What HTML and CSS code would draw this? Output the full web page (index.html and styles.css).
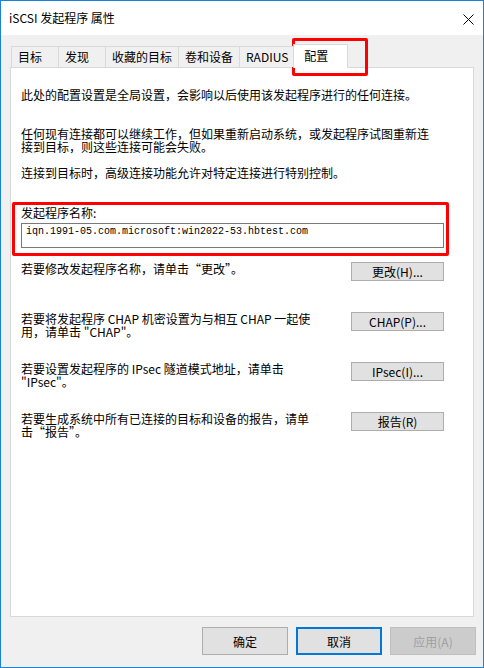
FILE: index.html
```html
<!DOCTYPE html>
<html lang="zh-CN">
<head>
<meta charset="UTF-8">
<title>iSCSI 发起程序 属性</title>
<link rel="stylesheet" href="styles.css">
</head>
<body>

<div class="window">
    <div class="titlebar">
        <span class="title">iSCSI 发起程序 属性</span>
        <svg class="close" width="11" height="11" viewBox="0 0 11 11">
            <path d="M0.5 0.5 L10.5 10.5 M10.5 0.5 L0.5 10.5" stroke="#000" stroke-width="1" fill="none"/>
        </svg>
    </div>

    <!-- Abas -->
    <div class="tabs">
        <div class="tab">目标</div>
        <div class="tab">发现</div>
        <div class="tab">收藏的目标</div>
        <div class="tab">卷和设备</div>
        <div class="tab">RADIUS</div>
        <div class="tab active">配置</div>
    </div>

    <div class="panel">
        <p class="text intro">此处的配置设置是全局设置，会影响以后使用该发起程序进行的任何连接。</p>
        <p class="text warn">任何现有连接都可以继续工作，但如果重新启动系统，或发起程序试图重新连<br>接到目标，则这些连接可能会失败。</p>
        <p class="text adv">连接到目标时，高级连接功能允许对特定连接进行特别控制。</p>

        <div class="name-group">
            <div class="label">发起程序名称:</div>
            <div class="name-box">iqn.1991-05.com.microsoft:win2022-53.hbtest.com</div>
        </div>

        <div class="actions">
            <div class="action">
                <p class="text">若要修改发起程序名称，请单击“更改”。</p>
                <button class="btn-small">更改(H)...</button>
            </div>
            <div class="action">
                <p class="text">若要将发起程序 CHAP 机密设置为与相互 CHAP 一起使<br>用，请单击 "CHAP"。</p>
                <button class="btn-small">CHAP(P)...</button>
            </div>
            <div class="action">
                <p class="text">若要设置发起程序的 IPsec 隧道模式地址，请单击<br>"IPsec"。</p>
                <button class="btn-small">IPsec(I)...</button>
            </div>
            <div class="action">
                <p class="text">若要生成系统中所有已连接的目标和设备的报告，请单<br>击“报告”。</p>
                <button class="btn-small">报告(R)</button>
            </div>
        </div>
    </div>

    <div class="footer">
        <button class="btn">确定</button>
        <button class="btn btn-focus">取消</button>
        <button class="btn" disabled>应用(A)</button>
    </div>

    <!-- marcação vermelha sobre a aba -->
    <div class="mark mark-tab"></div>
</div>

</body>
</html>
```

FILE: styles.css
```css
body {
    margin: 0;
    padding: 0;
    font-family: "Noto Sans CJK SC", "Liberation Sans", sans-serif;
    font-size: 12px;
    color: #000;
}

.window {
    position: relative;
    width: 484px;
    height: 668px;
    box-sizing: border-box;
    border: 1px solid #1883d7;
    background-color: #f0f0f0;
    display: flex;
    flex-direction: column;
}

.titlebar {
    height: 34px;
    background-color: #fff;
    display: flex;
    align-items: center;
    justify-content: space-between;
    padding: 0 9px 0 8px;
}

.title {
    font-size: 12px;
    line-height: 16px;
}

.close {
    display: block;
    margin-top: 2px;
}

.tabs {
    height: 32px;
    display: flex;
    align-items: flex-end;
    padding-left: 10px;
    position: relative;
    z-index: 1;
}

.tab {
    height: 21px;
    box-sizing: border-box;
    min-width: 48px;
    padding: 0 6px;
    border: 1px solid #d9d9d9;
    border-bottom: none;
    margin-left: -1px;
    line-height: 20px;
    background-color: #f0f0f0;
}

.tab:first-child {
    margin-left: 0;
}

.tab.active {
    height: 24px;
    width: 55px;
    margin-left: -2px;
    margin-bottom: -1px;
    padding-left: 10px;
    background-color: #fff;
    line-height: 22px;
}

.panel {
    height: 550px;
    box-sizing: border-box;
    margin: 0 9px;
    border: 1px solid #d9d9d9;
    background-color: #fff;
    padding: 20px 29px 0 10px;
}

.text {
    margin: 0;
    line-height: 13px;
    white-space: nowrap;
}

.warn {
    margin-top: 26px;
}

.adv {
    margin-top: 13px;
}

.name-group {
    position: relative;
    margin-top: 28px;
}

.name-group::before {
    content: "";
    position: absolute;
    top: -5px;
    left: -9px;
    right: -5px;
    bottom: -8px;
    border: 3px solid #f00;
    border-radius: 2px;
}

.label {
    line-height: 12px;
}

.name-box {
    margin-top: 4px;
    height: 25px;
    box-sizing: border-box;
    border: 1px solid #7a7a7a;
    padding: 2px 4px;
    font-family: "Liberation Mono", monospace;
    font-size: 10px;
    line-height: 12px;
}

.actions {
    margin-top: 14px;
}

.action {
    height: 50px;
    display: flex;
    align-items: flex-start;
    justify-content: space-between;
}

.btn-small {
    width: 93px;
    height: 19px;
    box-sizing: border-box;
    border: 1px solid #adadad;
    background-color: #e1e1e1;
    font-family: "Noto Sans CJK SC", sans-serif;
    font-size: 12px;
    line-height: 15px;
    padding: 0;
    color: #000;
}

.footer {
    display: flex;
    justify-content: flex-end;
    gap: 8px;
    padding: 10px 7px 0 0;
}

.btn {
    width: 86px;
    height: 28px;
    box-sizing: border-box;
    border: 1px solid #adadad;
    background-color: #e1e1e1;
    font-family: "Noto Sans CJK SC", sans-serif;
    font-size: 12px;
    color: #000;
    padding: 0;
}

.btn-focus {
    border: 2px solid #0078d7;
}

.btn:disabled {
    background-color: #cccccc;
    border-color: #bfbfbf;
    color: #a0a0a0;
}

.mark {
    position: absolute;
    border: 3px solid #f00;
    border-radius: 2px;
    box-sizing: border-box;
}

.mark-tab {
    left: 291px;
    top: 37px;
    width: 76px;
    height: 38px;
}
```
